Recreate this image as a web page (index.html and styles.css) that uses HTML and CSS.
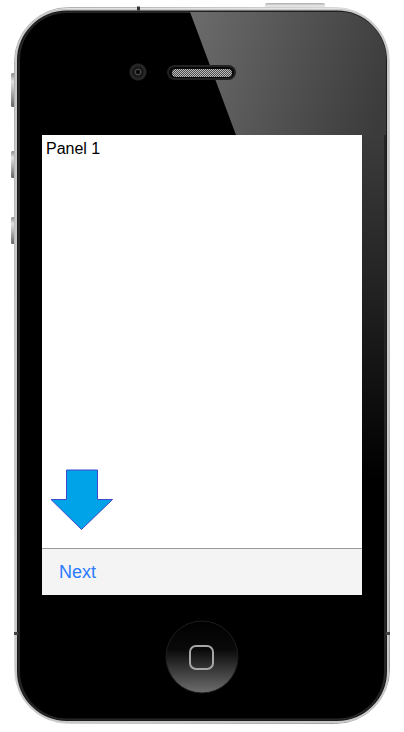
FILE: index.html
```html
<!DOCTYPE html>
<html lang="en">
<head>
<meta charset="utf-8">
<title>Phone panel</title>
<link rel="stylesheet" href="styles.css">
</head>
<body>
<div class="phone">
  <svg class="frame" width="404" height="732" viewBox="0 0 404 732" aria-hidden="true">
    <defs>
      <linearGradient id="btn" x1="0" y1="0" x2="0" y2="1">
        <stop offset="0" stop-color="#8a8a8a"/><stop offset=".25" stop-color="#e4e4e4"/><stop offset=".6" stop-color="#aaa"/><stop offset="1" stop-color="#666"/>
      </linearGradient>
      <linearGradient id="pow" x1="0" y1="0" x2="0" y2="1">
        <stop offset="0" stop-color="#aaa"/><stop offset=".5" stop-color="#ececec"/><stop offset="1" stop-color="#bbb"/>
      </linearGradient>
      <linearGradient id="rim" x1="0" y1="0" x2="1" y2="1">
        <stop offset="0" stop-color="#aaa"/><stop offset=".5" stop-color="#ddd"/><stop offset="1" stop-color="#999"/>
      </linearGradient>
      <linearGradient id="gloss" gradientUnits="userSpaceOnUse" x1="190" y1="40" x2="386" y2="100">
        <stop offset="0" stop-color="#6a6a6a"/><stop offset="1" stop-color="#3b3b3b"/>
      </linearGradient>
      <linearGradient id="side" gradientUnits="userSpaceOnUse" x1="0" y1="135" x2="0" y2="480">
        <stop offset="0" stop-color="#3c3c3c"/><stop offset=".5" stop-color="#1f1f1f"/><stop offset="1" stop-color="#000"/>
      </linearGradient>
      <linearGradient id="home" x1="0" y1="0" x2="0" y2="1">
        <stop offset="0" stop-color="#000"/><stop offset=".4" stop-color="#0a0a0a"/><stop offset="1" stop-color="#6e6e6e"/>
      </linearGradient>
      <radialGradient id="cam">
        <stop offset="0" stop-color="#111"/><stop offset=".3" stop-color="#4a4a4a"/><stop offset=".45" stop-color="#111"/><stop offset=".8" stop-color="#2c2c2c"/><stop offset="1" stop-color="#0c0c0c"/>
      </radialGradient>
      <pattern id="mesh" width="2" height="2" patternUnits="userSpaceOnUse">
        <rect width="2" height="2" fill="#4c4c4c"/><rect width="1" height="1" fill="#bcbcbc"/><rect x="1" y="1" width="1" height="1" fill="#bcbcbc"/>
      </pattern>
      <clipPath id="inner"><rect x="17.5" y="11.5" width="369" height="709" rx="49"/></clipPath>
    </defs>

    <rect x="11" y="73" width="4" height="34" rx="1.500" fill="url(#btn)"/>
    <rect x="11" y="151" width="4" height="27" rx="1.500" fill="url(#btn)"/>
    <rect x="11" y="217" width="4" height="27" rx="1.500" fill="url(#btn)"/>
    <rect x="265" y="3" width="60" height="6" rx="2" fill="url(#pow)"/>

    <rect x="14.500" y="7.500" width="375" height="716" rx="54" fill="#fff" stroke="url(#rim)" stroke-width="1"/>
    <rect x="16" y="9.500" width="372" height="712.500" rx="51" fill="#1c1c1c" stroke="#c8c8c8" stroke-width="2"/>
    <rect x="18" y="11.500" width="368" height="708.500" rx="49" fill="#262626"/>
    <rect x="20" y="13" width="364" height="705.500" rx="47" fill="#000"/>

    <g clip-path="url(#inner)">
      <polygon points="190,12 236,135 362,135 362,12" fill="url(#gloss)"/>
      <rect x="362" y="12" width="24" height="123" fill="url(#gloss)"/>
      <rect x="362" y="135" width="22" height="345" fill="url(#side)"/>
    </g>

    <rect x="137" y="6.500" width="3" height="4" fill="#333"/>
    <rect x="14" y="632" width="4" height="3" fill="#444"/>
    <rect x="386" y="632" width="4" height="3" fill="#444"/>

    <circle cx="138" cy="72" r="9" fill="url(#cam)"/>
    <circle cx="138" cy="72" r="2" fill="#050505"/>

    <rect x="167" y="65" width="69" height="15" rx="7.500" fill="#222"/>
    <rect x="169" y="67" width="65" height="11" rx="5.500" fill="#080808"/>
    <rect x="172" y="69" width="60" height="8" rx="4" fill="url(#mesh)"/>

    <circle cx="202" cy="657" r="36" fill="url(#home)" stroke="#1d1d1d" stroke-width="1"/>
    <rect x="190" y="646" width="23" height="23" rx="6" fill="none" stroke="#a6a6a6" stroke-width="2"/>
  </svg>

  <main class="screen">
    <section class="panel">
      <p class="panel-title">Panel 1</p>
      <svg class="arrow" width="64" height="62" viewBox="0 0 64 62" aria-hidden="true">
        <polygon points="16.500,1 47.500,1 47.500,30.500 62.500,30.500 31.500,60.500 1,30.500 16.500,30.500" fill="#00a2e8" stroke="#3f48cc" stroke-width="1"/>
      </svg>
    </section>
    <footer class="toolbar"><span class="next">Next</span></footer>
  </main>
</div>
</body>
</html>
```

FILE: styles.css
```css
html, body {
  margin: 0;
  padding: 0;
  background: #fff;
}

.phone {
  position: relative;
  box-sizing: border-box;
  width: 404px;
  height: 732px;
  padding: 135px 42px 137px;
  overflow: hidden;
  font-family: "Liberation Sans", Arial, sans-serif;
}

.frame {
  position: absolute;
  top: 0;
  left: 0;
  display: block;
}

.screen {
  position: relative;
  display: flex;
  flex-direction: column;
  height: 100%;
  background: #fff;
}

.panel {
  flex: 1;
  display: flex;
  flex-direction: column;
  justify-content: space-between;
  padding: 5px 0 17px 4px;
  min-height: 0;
}

.panel-title {
  margin: 0;
  font-size: 16px;
  line-height: 18px;
  color: #000;
}

.arrow {
  display: block;
  margin-left: 4px;
}

.toolbar {
  box-sizing: border-box;
  height: 47px;
  display: flex;
  align-items: center;
  padding-left: 17px;
  background: #f4f4f4;
  border-top: 1px solid #999;
}

.next {
  font-size: 18px;
  color: #2b7bff;
}
```
